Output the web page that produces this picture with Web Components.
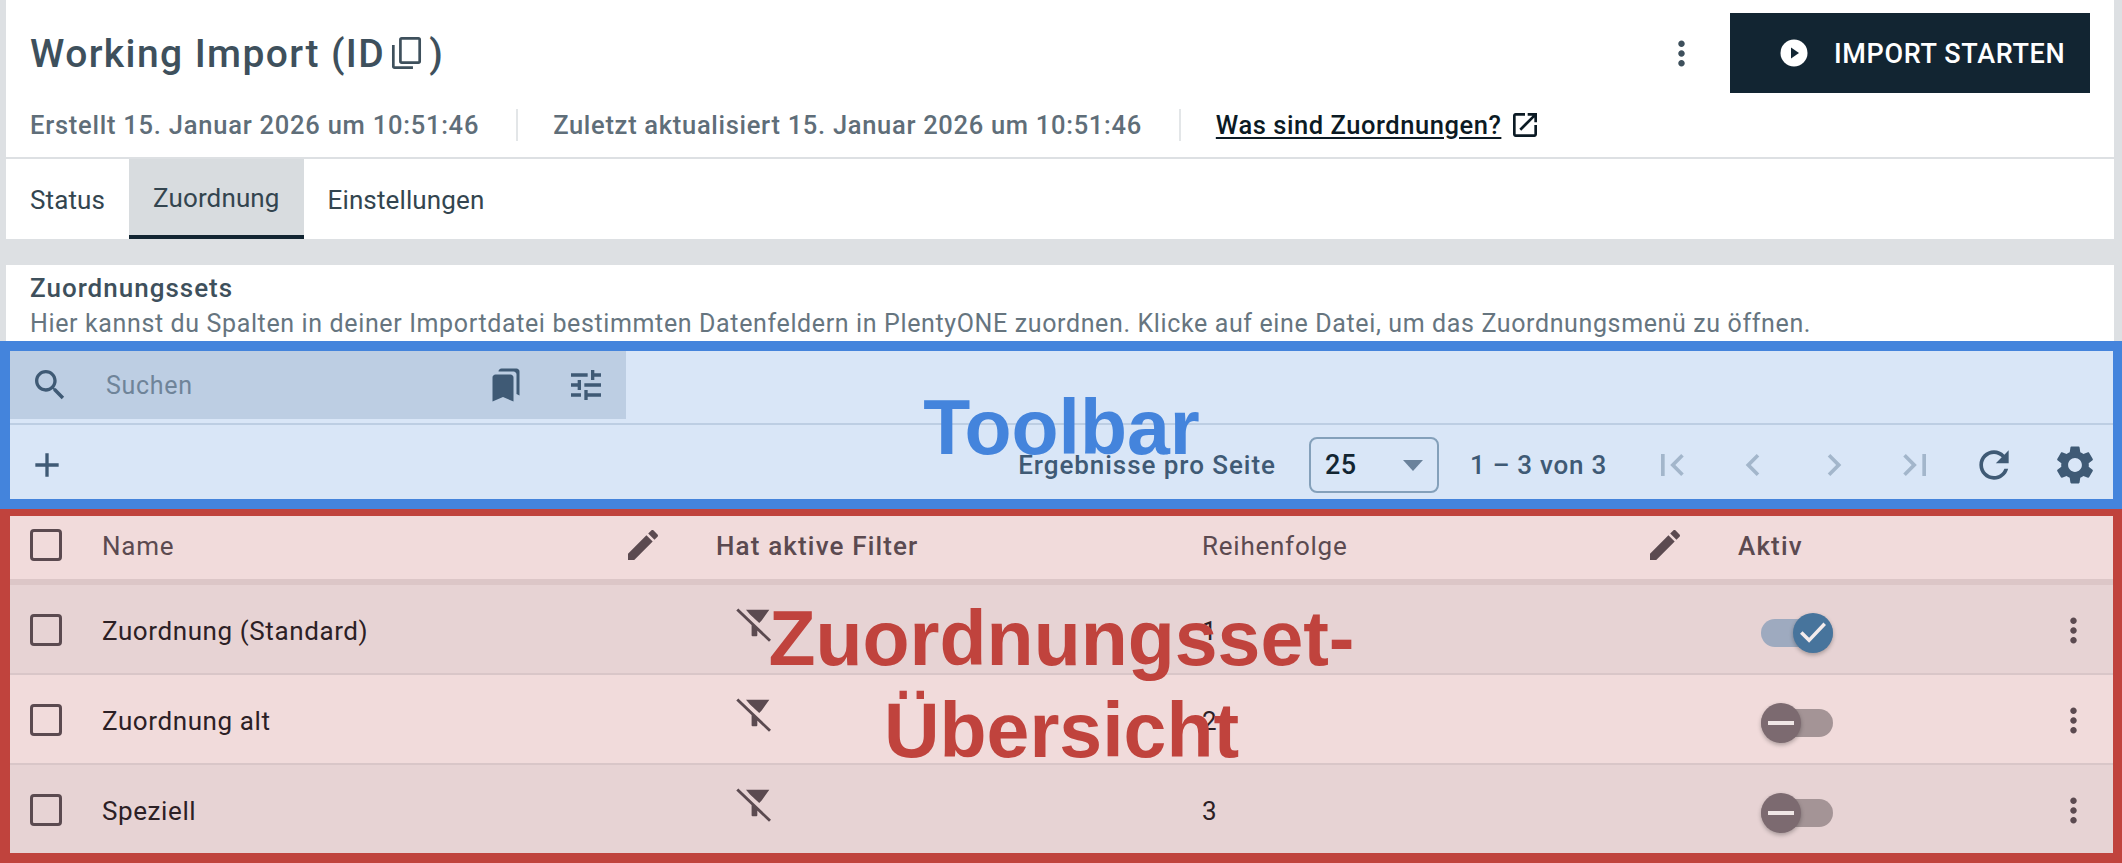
<!DOCTYPE html>
<html lang="de">
<head>
<meta charset="utf-8">
<title>Working Import</title>
<style>
  html, body { margin: 0; padding: 0; background: #dde0e3; }
  body { font-family: Roboto, "Liberation Sans", sans-serif; }
</style>
</head>
<body>
<import-page></import-page>
<script>
const ICONS = {
  search: 'M15.5 14h-.79l-.28-.27C15.41 12.59 16 11.11 16 9.5 16 5.91 13.09 3 9.5 3S3 5.91 3 9.5 5.91 16 9.5 16c1.61 0 3.09-.59 4.23-1.57l.27.28v.79l5 4.99L20.49 19l-4.99-5zm-6 0C7.01 14 5 11.99 5 9.5S7.01 5 9.5 5 14 7.01 14 9.5 11.99 14 9.5 14z',
  bookmarks: 'M19 18l2 1V3c0-1.1-.9-2-2-2H8.99C7.89 1 7 1.9 7 3h10c1.1 0 2 .9 2 2v13zM15 5H5c-1.1 0-2 .9-2 2v16l7-3 7 3V7c0-1.1-.9-2-2-2z',
  tune: 'M3 17v2h6v-2H3zM3 5v2h10V5H3zm10 16v-2h8v-2h-8v-2h-2v6h2zM7 9v2H3v2h4v2h2V9H7zm14 4v-2H11v2h10zm-6-4h2V7h4V5h-4V3h-2v6z',
  add: 'M19 13h-6v6h-2v-6H5v-2h6V5h2v6h6v2z',
  first: 'M18.41 16.59L13.82 12l4.59-4.59L17 6l-6 6 6 6zM6 6h2v12H6z',
  prev: 'M15.41 7.41L14 6l-6 6 6 6 1.41-1.41L10.83 12z',
  next: 'M10 6L8.59 7.41 13.17 12l-4.58 4.59L10 18l6-6z',
  last: 'M5.59 7.41L10.18 12l-4.59 4.59L7 18l6-6-6-6zM16 6h2v12h-2z',
  refresh: 'M17.65 6.35C16.2 4.9 14.21 4 12 4c-4.42 0-7.99 3.58-7.99 8s3.57 8 7.99 8c3.73 0 6.84-2.55 7.73-6h-2.08c-.82 2.33-3.04 4-5.65 4-3.31 0-6-2.69-6-6s2.69-6 6-6c1.66 0 3.14.69 4.22 1.78L13 11h7V4l-2.35 2.35z',
  settings: 'M19.14 12.94c.04-.3.06-.61.06-.94 0-.32-.02-.64-.07-.94l2.03-1.58c.18-.14.23-.41.12-.61l-1.92-3.32c-.12-.22-.37-.29-.59-.22l-2.39.96c-.5-.38-1.03-.7-1.62-.94l-.36-2.54c-.04-.24-.24-.41-.48-.41h-3.84c-.24 0-.43.17-.47.41l-.36 2.54c-.59.24-1.13.57-1.62.94l-2.39-.96c-.22-.08-.47 0-.59.22L2.74 8.87c-.12.21-.08.47.12.61l2.03 1.58c-.05.3-.09.63-.09.94s.02.64.07.94l-2.03 1.58c-.18.14-.23.41-.12.61l1.92 3.32c.12.22.37.29.59.22l2.39-.96c.5.38 1.03.7 1.62.94l.36 2.54c.05.24.24.41.48.41h3.84c.24 0 .44-.17.47-.41l.36-2.54c.59-.24 1.13-.56 1.62-.94l2.39.96c.22.08.47 0 .59-.22l1.92-3.32c.12-.22.07-.47-.12-.61l-2.01-1.58zM12 15.6c-1.98 0-3.6-1.62-3.6-3.6s1.62-3.6 3.6-3.6 3.6 1.62 3.6 3.6-1.62 3.6-3.6 3.6z',
  edit: 'M3 17.25V21h3.75L17.81 9.94l-3.75-3.75L3 17.25zM20.71 7.04c.39-.39.39-1.02 0-1.41l-2.34-2.34c-.39-.39-1.02-.39-1.41 0l-1.83 1.83 3.75 3.75 1.83-1.83z',
  open: 'M19 19H5V5h7V3H5c-1.11 0-2 .9-2 2v14c0 1.1.89 2 2 2h14c1.1 0 2-.9 2-2v-7h-2v7zM14 3v2h3.59l-9.83 9.83 1.41 1.41L19 6.41V10h2V3h-7z',
  kebab: 'M12 8c1.1 0 2-.9 2-2s-.9-2-2-2-2 .9-2 2 .9 2 2 2zm0 2c-1.1 0-2 .9-2 2s.9 2 2 2 2-.9 2-2-.9-2-2-2zm0 6c-1.1 0-2 .9-2 2s.9 2 2 2 2-.9 2-2-.9-2-2-2z',
  copy: 'M8.3.7h11.7a1.9 1.9 0 0 1 1.9 1.9v15.300a1.9 1.9 0 0 1-1.9 1.9H8.3a1.9 1.9 0 0 1-1.9-1.9V2.600A1.9 1.9 0 0 1 8.3.7zm0 1.9v15.3h11.700V2.600H8.300zM1.400 6.400h1.900v15h12.900v1.900H3.300a1.900 1.900 0 0 1-1.900-1.900z',
  filteroff: 'M6.350 1.180H22.800L17.400 8.900 15.700 10.600 9.200 4.500zM10.300 10.600l4.050 4.200V19.300a.7.7 0 0 1-.7.7H11a.7.7 0 0 1-.7-.7zM.900.400 24 22.400 22.600 23.800-.500 1.800z',
  check: 'M9.55 18.200 3.800 12.450l1.600-1.600 4.150 4.150 9.050-9.600 1.600 1.600z'
};

class UiIcon extends HTMLElement {
  connectedCallback() {
    const size = this.getAttribute('size') || 24;
    const name = this.getAttribute('name');
    this.attachShadow({ mode: 'open' }).innerHTML = `
      <style>
        :host { display: inline-flex; flex: none; line-height: 0; color: inherit; }
        svg { display: block; fill: currentColor; overflow: visible; }
      </style>
      <svg width="${size}" height="${size}" viewBox="0 0 24 24"><path d="${ICONS[name]}"/></svg>`;
  }
}

class ImportButton extends HTMLElement {
  connectedCallback() {
    this.attachShadow({ mode: 'open' }).innerHTML = `
      <style>
        :host {
          display: flex; align-items: center; width: 360px; height: 80px; box-sizing: border-box;
          padding: 2px 0 0 50px; background: #122532; color: #fff;
          font-size: 27px; font-weight: 500; letter-spacing: .65px;
        }
        svg { display: block; margin-right: 26px; margin-top: -2px; }
      </style>
      <svg width="28" height="28" viewBox="0 0 28 28">
        <circle cx="14" cy="14" r="13.500" fill="#fff"/><path d="M11 8.500 19 14l-8 5.500z" fill="#122532"/>
      </svg>
      <slot></slot>`;
  }
}

class PageHeader extends HTMLElement {
  connectedCallback() {
    this.attachShadow({ mode: 'open' }).innerHTML = `
      <style>
        :host { display: block; background: #fff; color: #3e505c; }
        .top { display: flex; align-items: center; height: 109px; box-sizing: border-box; padding: 0 24px 3px 24px; }
        h1 { display: flex; align-items: center; margin: 0; padding-top: 2px; font-size: 39px; font-weight: 500; letter-spacing: 1.4px; flex: 1; }
        h1 ui-icon { margin: -2px 5px 0 5px; }
        .kebab { margin-right: 29px; color: #3e505c; }
        .meta { display: flex; align-items: center; height: 32px; padding: 0 0 16px 24px; border-bottom: 2px solid #dde0e3;
                font-size: 25.500px; letter-spacing: .76px; color: #5f6e79; font-weight: 500; }
        .sep { width: 2px; height: 32px; background: #e3e6e8; margin: 0 35px 0 37px; }
        .updated { letter-spacing: .7px; }
        a { color: #0b1a24; text-decoration: underline; text-underline-offset: 3px; font-weight: 500; letter-spacing: .55px; }
        .link { display: flex; align-items: center; gap: 8px; color: #0b1a24; }
      </style>
      <div class="top">
        <h1>Working Import (ID<ui-icon name="copy" size="34"></ui-icon>)</h1>
        <ui-icon class="kebab" name="kebab" size="39"></ui-icon>
        <import-button>IMPORT STARTEN</import-button>
      </div>
      <div class="meta">
        <span>Erstellt 15. Januar 2026 um 10:51:46</span><span class="sep"></span>
        <span class="updated">Zuletzt aktualisiert 15. Januar 2026 um 10:51:46</span><span class="sep"></span>
        <span class="link"><a>Was sind Zuordnungen?</a><ui-icon name="open" size="32"></ui-icon></span>
      </div>
      <page-tabs></page-tabs>`;
  }
}

class PageTabs extends HTMLElement {
  connectedCallback() {
    this.attachShadow({ mode: 'open' }).innerHTML = `
      <style>
        :host { display: flex; height: 80px; font-size: 26px; letter-spacing: .12px; color: #33454f; }
        div { display: flex; align-items: center; padding: 2px 24px 0; box-sizing: border-box; }
        .on { background: #d8dcdf; border-bottom: 4px solid #122532; color: #33454f; }
      </style>
      <div>Status</div><div class="on">Zuordnung</div><div>Einstellungen</div>`;
  }
}

class SectionIntro extends HTMLElement {
  connectedCallback() {
    this.attachShadow({ mode: 'open' }).innerHTML = `
      <style>
        :host { display: block; height: 76px; box-sizing: border-box; padding: 8px 24px 0; background: #fff; overflow: hidden; }
        h2 { margin: 0; font-size: 26px; line-height: 30px; font-weight: 500; letter-spacing: 1px; color: #3e505c; }
        p { margin: 6px 0 0; font-size: 25px; line-height: 30px; letter-spacing: .63px; color: #66757f; }
      </style>
      <h2>Zuordnungssets</h2>
      <p>Hier kannst du Spalten in deiner Importdatei bestimmten Datenfeldern in PlentyONE zuordnen. Klicke auf eine Datei, um das Zuordnungsmenü zu öffnen.</p>`;
  }
}

/* annotation frame drawn over a part of the screenshot */
class AnnotationFrame extends HTMLElement {
  connectedCallback() {
    this.attachShadow({ mode: 'open' }).innerHTML = `
      <style>
        :host { display: block; position: relative; box-sizing: border-box; border: 10px solid var(--frame); border-right-width: 9px; }
        .label {
          position: absolute; left: 0; right: 0; top: var(--label-top); text-align: center; pointer-events: none;
          font-family: "Liberation Sans", sans-serif; font-weight: 700; font-size: 77px; line-height: 92px;
          color: var(--frame); white-space: pre-line;
        }
      </style>
      <slot></slot>
      <div class="label">${this.getAttribute('label')}</div>`;
  }
}

class MapToolbar extends HTMLElement {
  connectedCallback() {
    this.attachShadow({ mode: 'open' }).innerHTML = `
      <style>
        :host { display: block; height: 148px; background: #d9e6f7; color: #3f5a75; font-size: 26px; }
        .top { height: 72px; border-bottom: 2px solid #bdcee3; box-sizing: content-box; }
        .search { display: flex; align-items: center; width: 616px; height: 68px; background: #bdcee3; box-sizing: border-box; padding-left: 20px; }
        .search .q { margin-left: 36px; flex: 1; color: #6f8499; font-size: 25px; letter-spacing: .7px; }
        .search .bm { margin-right: 42px; }
        .search .tu { margin-right: 20px; }
        .bottom { display: flex; align-items: center; height: 74px; padding: 6px 16px 0 17px; box-sizing: border-box; }
        .spacer { flex: 1; }
        .label { font-weight: 500; letter-spacing: .95px; }
        .sel { display: flex; align-items: center; justify-content: space-between; width: 130px; height: 56px; box-sizing: border-box;
               margin: 0 31px 0 33px; padding: 0 14px; border: 2px solid #84a0ba; border-radius: 8px; color: #122532;
               font-size: 27px; letter-spacing: .5px; font-weight: 500; }
        .tri { width: 0; height: 0; border: 10px solid transparent; border-top: 11px solid #6a829b; border-bottom: 0; }
        .dis { color: #a3b6cb; }
        .count { font-weight: 500; letter-spacing: .75px; margin-right: 43px; }
        .pg { display: flex; align-items: center; gap: 37px; }
        .end { margin-right: -2px; }
      </style>
      <div class="top"><div class="search">
        <ui-icon name="search" size="40"></ui-icon><span class="q">Suchen</span>
        <ui-icon class="bm" name="bookmarks" size="36"></ui-icon>
        <ui-icon class="tu" name="tune" size="40"></ui-icon>
      </div></div>
      <div class="bottom">
        <ui-icon name="add" size="40"></ui-icon>
        <span class="spacer"></span>
        <span class="label">Ergebnisse pro Seite</span>
        <span class="sel">25<span class="tri"></span></span>
        <span class="count">1 – 3 von 3</span>
        <span class="pg">
          <ui-icon class="dis" name="first" size="44"></ui-icon>
          <ui-icon class="dis" name="prev" size="44"></ui-icon>
          <ui-icon class="dis" name="next" size="44"></ui-icon>
          <ui-icon class="dis end" name="last" size="44"></ui-icon>
          <ui-icon name="refresh" size="44"></ui-icon>
          <ui-icon name="settings" size="46" style="margin:-1px"></ui-icon>
        </span>
      </div>`;
  }
}

class UiCheckbox extends HTMLElement {
  connectedCallback() {
    this.attachShadow({ mode: 'open' }).innerHTML = `
      <style>
        :host { display: block; width: 32px; height: 32px; box-sizing: border-box; border: 3.500px solid #5b4a50; border-radius: 4px; }
      </style>`;
  }
}

class UiSwitch extends HTMLElement {
  connectedCallback() {
    const on = this.hasAttribute('on');
    this.attachShadow({ mode: 'open' }).innerHTML = `
      <style>
        :host { display: flex; align-items: center; position: relative; width: 72px; height: 40px; }
        .track { width: 72px; height: 28px; border-radius: 14px; background: ${on ? '#9eaabf' : '#a49496'}; }
        .knob { position: absolute; top: 0; ${on ? 'right' : 'left'}: 0; width: 40px; height: 40px; border-radius: 50%;
                display: flex; align-items: center; justify-content: center; color: #f4ecec;
                background: ${on ? '#47749c' : '#7c6a70'}; box-shadow: 0 2px 4px rgba(0,0,0,.28); }
        .dash { width: 26px; height: 4px; background: #efe6e6; }
      </style>
      <div class="track"></div>
      <div class="knob">${on ? '<ui-icon name="check" size="38"></ui-icon>' : '<span class="dash"></span>'}</div>`;
  }
}

const COLS = 'grid-template-columns: 72px 614px 486px 536px 1fr;';

class MapRow extends HTMLElement {
  connectedCallback() {
    this.attachShadow({ mode: 'open' }).innerHTML = `
      <style>
        :host { display: grid; ${COLS} align-items: center; height: 90px; box-sizing: border-box; padding: 2px 0 0 20px;
                border-bottom: 2px solid #d9c6c8; background: var(--row-bg, #f1dbdb); color: #2c2025; font-size: 26px; letter-spacing: .6px; }
        :host(:last-child) { border-bottom: 0; height: 88px; }
        .name, .order { padding-top: 2px; }
        .filter { padding-left: 21px; color: #5b4a50; margin-top: -4px; }
        .sw { display: flex; align-items: center; justify-content: space-between; padding-left: 23px; padding-right: 20px; color: #5b4a50; }
        .sw ui-switch { margin-top: 6px; }
      </style>
      <ui-checkbox></ui-checkbox>
      <span class="name">${this.getAttribute('name')}</span>
      <span class="filter"><ui-icon name="filteroff" size="34"></ui-icon></span>
      <span class="order">${this.getAttribute('order')}</span>
      <span class="sw"><ui-switch ${this.hasAttribute('on') ? 'on' : ''}></ui-switch><ui-icon name="kebab" size="39"></ui-icon></span>`;
  }
}

class MapTable extends HTMLElement {
  connectedCallback() {
    this.attachShadow({ mode: 'open' }).innerHTML = `
      <style>
        :host { display: block; background: #f1dbdb; }
        .head { display: grid; ${COLS} align-items: center; height: 69px; box-sizing: border-box; padding-left: 20px; padding-bottom: 6px;
                border-bottom: 6px solid #dcc6c7; color: #5b4a50; font-size: 26px; letter-spacing: .75px; }
        .cell { display: flex; align-items: center; justify-content: space-between; padding-right: 53px; }
        .strong { font-weight: 500; letter-spacing: 1.15px; }
        .txt { padding-top: 2px; }
        .rows map-row:nth-child(odd) { --row-bg: #e7d3d4; }
      </style>
      <div class="head">
        <ui-checkbox></ui-checkbox>
        <span class="cell"><span class="txt">Name</span><ui-icon name="edit" size="40"></ui-icon></span>
        <span class="strong txt">Hat aktive Filter</span>
        <span class="cell"><span class="txt">Reihenfolge</span><ui-icon name="edit" size="40"></ui-icon></span>
        <span class="strong txt">Aktiv</span>
      </div>
      <div class="rows">
        <map-row name="Zuordnung (Standard)" order="1" on></map-row>
        <map-row name="Zuordnung alt" order="2"></map-row>
        <map-row name="Speziell" order="3"></map-row>
      </div>`;
  }
}

class ImportPage extends HTMLElement {
  connectedCallback() {
    this.attachShadow({ mode: 'open' }).innerHTML = `
      <style>
        :host { display: block; width: 2122px; height: 863px; overflow: hidden; background: #dde0e3; }
        .wrap { padding: 0 8px 0 6px; }
        page-header { margin-bottom: 26px; }
        .blue { --frame: #4484dc; --label-top: 30px; }
        .red { --frame: #c0433d; --label-top: 76px; border-top-width: 7px; }
      </style>
      <div class="wrap">
        <page-header></page-header>
        <section-intro></section-intro>
      </div>
      <annotation-frame class="blue" label="Toolbar"><map-toolbar></map-toolbar></annotation-frame>
      <annotation-frame class="red" label="Zuordnungsset-&#10;Übersicht"><map-table></map-table></annotation-frame>`;
  }
}

customElements.define('ui-icon', UiIcon);
customElements.define('import-button', ImportButton);
customElements.define('page-tabs', PageTabs);
customElements.define('page-header', PageHeader);
customElements.define('section-intro', SectionIntro);
customElements.define('annotation-frame', AnnotationFrame);
customElements.define('map-toolbar', MapToolbar);
customElements.define('ui-checkbox', UiCheckbox);
customElements.define('ui-switch', UiSwitch);
customElements.define('map-row', MapRow);
customElements.define('map-table', MapTable);
customElements.define('import-page', ImportPage);
</script>
</body>
</html>
